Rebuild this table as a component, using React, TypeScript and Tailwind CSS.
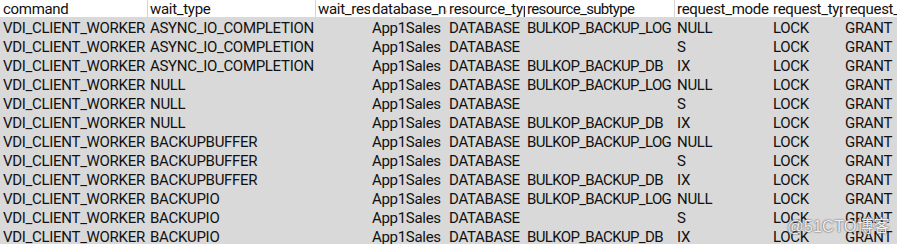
import React from "react";

const widthCls = [
  "w-[148px] pl-[3px]",
  "w-[168px] pl-[2px]",
  "w-[54px] pl-[2px]",
  "w-[77px] pl-[2px]",
  "w-[78px] pl-[2px]",
  "w-[150px] pl-[2px] tracking-[-0.65px]",
  "w-[96px] pl-[2px]",
  "w-[72px] pl-[2px]",
  "w-[60px] pl-[2px]",
];
const header = [
  "command",
  "wait_type",
  "wait_resource",
  "database_name",
  "resource_type",
  "resource_subtype",
  "request_mode",
  "request_type",
  "request_status",
];
const headerBorder = [true, true, false, false, false, true, false, false, false];

const waits = ["ASYNC_IO_COMPLETION", "NULL", "BACKUPBUFFER", "BACKUPIO"];
const sub = [
  ["BULKOP_BACKUP_LOG", "NULL"],
  ["", "S"],
  ["BULKOP_BACKUP_DB", "IX"],
];

const rows: string[][] = [];
waits.forEach((w) => {
  sub.forEach(([s, m]) => {
    rows.push(["VDI_CLIENT_WORKER", w, "", "App1Sales", "DATABASE", s, m, "LOCK", "GRANT"]);
  });
});

export default function App() {
  return (
    <div className="relative w-[897px] h-[244px] overflow-hidden bg-[#d9d9d9] text-[15px] tracking-[-0.3px] text-[#111] font-['Roboto','Liberation_Sans',sans-serif]">
      <div className="flex h-[17px] bg-white">
        {header.map((h, i) => (
          <div
            key={i}
            className={`shrink-0 overflow-hidden whitespace-nowrap h-[17px] leading-[19px] ${widthCls[i]} ${
              headerBorder[i] ? "border-r border-[#d4d4d4]" : ""
            }`}
          >
            {h}
          </div>
        ))}
      </div>
      {rows.map((r, ri) => (
        <div key={ri} className="flex h-[19px]">
          {r.map((c, ci) => (
            <div
              key={ci}
              className={`shrink-0 overflow-hidden whitespace-nowrap h-[19px] leading-[19px] pt-[2px] ${widthCls[ci]}`}
            >
              {c}
            </div>
          ))}
        </div>
      ))}
      <div className="absolute left-[787px] top-[218px] text-[16.5px] leading-[17px] tracking-normal text-white/90 whitespace-nowrap font-['Liberation_Sans','Noto_Sans_CJK_SC',sans-serif] [text-shadow:0_0_1px_#555,0_0_2px_#666]">
        @51CTO博客
      </div>
    </div>
  );
}
